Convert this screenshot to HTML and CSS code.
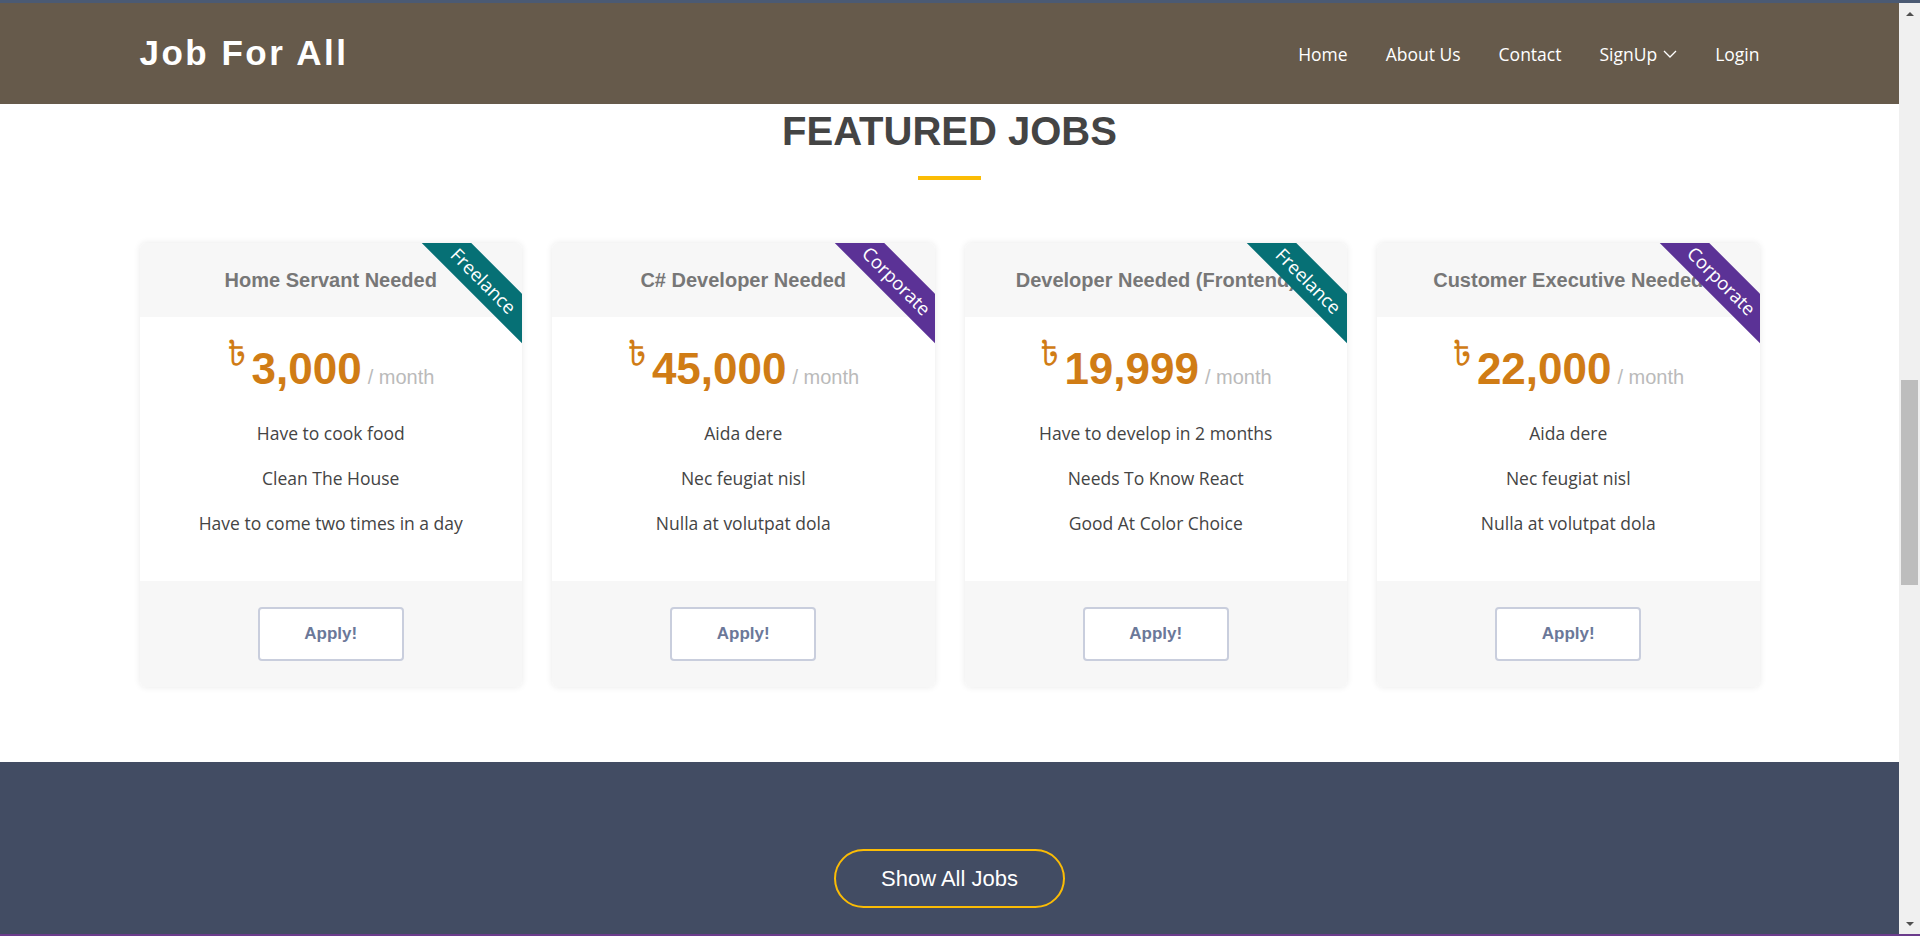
FILE: index.html
```html
<!DOCTYPE html>
<html lang="en">
<head>
<meta charset="utf-8">
<title>Job For All</title>
<link rel="stylesheet" href="styles.css">
</head>
<body>
<div class="window">
  <div class="frame-top"></div>
  <div class="viewport">
    <div class="page">
      <header class="topbar">
        <div class="container bar">
          <a class="logo" href="#">Job For All</a>
          <nav class="nav">
            <a href="#">Home</a>
            <a href="#">About Us</a>
            <a href="#">Contact</a>
            <a href="#" class="drop">SignUp <svg class="chev" width="14" height="8" viewBox="0 0 14 8"><polyline points="1,1 7,7 13,1" fill="none" stroke="#fff" stroke-width="1.3"/></svg></a>
            <a href="#">Login</a>
          </nav>
        </div>
      </header>

      <section class="featured">
        <h2 class="section-title">FEATURED JOBS</h2>
        <div class="title-bar"></div>
        <div class="container grid">
          <div class="card">
            <span class="ribbon freelance">Freelance</span>
            <div class="card-head"><h3>Home Servant Needed</h3></div>
            <div class="card-body">
              <h4 class="price"><span class="cur">৳</span><span class="amt">3,000</span><span class="per">/ month</span></h4>
              <ul class="list">
                <li>Have to cook food</li>
                <li>Clean The House</li>
                <li>Have to come two times in a day</li>
              </ul>
            </div>
            <div class="card-foot"><a href="#" class="apply">Apply!</a></div>
          </div>

          <div class="card">
            <span class="ribbon corporate">Corporate</span>
            <div class="card-head"><h3>C# Developer Needed</h3></div>
            <div class="card-body">
              <h4 class="price"><span class="cur">৳</span><span class="amt">45,000</span><span class="per">/ month</span></h4>
              <ul class="list">
                <li>Aida dere</li>
                <li>Nec feugiat nisl</li>
                <li>Nulla at volutpat dola</li>
              </ul>
            </div>
            <div class="card-foot"><a href="#" class="apply">Apply!</a></div>
          </div>

          <div class="card">
            <span class="ribbon freelance">Freelance</span>
            <div class="card-head"><h3>Developer Needed (Frontend)</h3></div>
            <div class="card-body">
              <h4 class="price"><span class="cur">৳</span><span class="amt">19,999</span><span class="per">/ month</span></h4>
              <ul class="list">
                <li>Have to develop in 2 months</li>
                <li>Needs To Know React</li>
                <li>Good At Color Choice</li>
              </ul>
            </div>
            <div class="card-foot"><a href="#" class="apply">Apply!</a></div>
          </div>

          <div class="card">
            <span class="ribbon corporate">Corporate</span>
            <div class="card-head"><h3>Customer Executive Needed</h3></div>
            <div class="card-body">
              <h4 class="price"><span class="cur">৳</span><span class="amt">22,000</span><span class="per">/ month</span></h4>
              <ul class="list">
                <li>Aida dere</li>
                <li>Nec feugiat nisl</li>
                <li>Nulla at volutpat dola</li>
              </ul>
            </div>
            <div class="card-foot"><a href="#" class="apply">Apply!</a></div>
          </div>
        </div>
      </section>

      <section class="cta">
        <a href="#" class="show-all">Show All Jobs</a>
      </section>
    </div>

    <div class="scrollbar">
      <div class="sb-btn"><span class="tri-up"></span></div>
      <div class="sb-track"><div class="sb-thumb"></div></div>
      <div class="sb-btn"><span class="tri-down"></span></div>
    </div>
  </div>
  <div class="frame-bottom"></div>
</div>
</body>
</html>
```

FILE: styles.css
```css
* { box-sizing: border-box; }
html, body { margin: 0; padding: 0; }
body {
  font-family: "Open Sans", "Liberation Sans", sans-serif;
  background: #fff;
  overflow: hidden;
}
a { text-decoration: none; color: inherit; }

.window {
  width: 1920px;
  height: 936px;
  display: flex;
  flex-direction: column;
}
.frame-top { height: 3px; background: #4b5a73; flex: none; }
.frame-bottom { height: 2px; background: #6b3c8c; flex: none; }

.viewport {
  flex: 1;
  display: flex;
  overflow: hidden;
}
.page {
  flex: 1;
  min-width: 0;
  overflow: hidden;
}

.container {
  width: 1620px;
  margin: 0 auto;
}

/* header */
.topbar {
  background: #665a4b;
  height: 101px;
}
.bar {
  height: 100%;
  display: flex;
  align-items: center;
  justify-content: space-between;
}
.logo {
  font-family: "Liberation Sans", Arial, sans-serif;
  font-weight: 700;
  font-size: 35px;
  letter-spacing: 2.5px;
  color: #fff;
  line-height: 1;
  padding-bottom: 2px;
}
.nav {
  display: flex;
  align-items: center;
  gap: 38px;
}
.nav a {
  color: #fff;
  font-size: 17.5px;
  line-height: 24px;
  display: flex;
  align-items: center;
}
.chev { margin-left: 6px; margin-top: 1px; }

/* featured */
.featured {
  height: 658px;
  padding-top: 3px;
}
.section-title {
  margin: 0;
  text-align: center;
  font-family: "Liberation Sans", Arial, sans-serif;
  font-weight: 700;
  font-size: 40px;
  line-height: 48px;
  color: #444;
}
.title-bar {
  width: 63px;
  height: 4px;
  background: #fbbc05;
  margin: 21px auto 0;
}
.grid {
  margin-top: 63px;
  display: grid;
  grid-template-columns: repeat(4, 1fr);
  gap: 30px;
}
.card {
  position: relative;
  overflow: hidden;
  background: #fff;
  border-radius: 6px;
  box-shadow: 0 0 7px rgba(0, 0, 0, 0.09);
  text-align: center;
}
.card-head {
  background: #f7f7f7;
  padding: 25px 0;
}
.card-head h3 {
  margin: 0;
  font-family: "Liberation Sans", Arial, sans-serif;
  font-weight: 700;
  font-size: 20px;
  line-height: 24px;
  color: #777;
  white-space: nowrap;
}
.card-body {
  padding: 27px 0 35px;
}
.price {
  margin: 0;
  height: 50px;
  display: flex;
  justify-content: center;
  align-items: baseline;
  font-family: "Liberation Sans", Arial, sans-serif;
  font-weight: 700;
  color: #d07c15;
}
.amt {
  font-size: 44px;
  line-height: 50px;
}
.cur {
  align-self: flex-start;
  font-family: "Noto Sans Bengali", "Lohit Bengali", "FreeSans", "DejaVu Sans", sans-serif;
  font-weight: 400;
  font-size: 33px;
  line-height: 30px;
  margin-top: -2px;
  margin-right: 5px;
}
.per {
  font-weight: 400;
  font-size: 20px;
  line-height: 50px;
  color: #bababa;
  margin-left: 6px;
}
.list {
  list-style: none;
  margin: 17px 0 0;
  padding: 0;
}
.list li {
  font-size: 17.5px;
  line-height: 45px;
  height: 45px;
  color: #444;
}
.card-foot {
  background: #f7f7f7;
  padding: 26px 0;
  height: 106px;
}
.apply {
  display: inline-block;
  width: 146px;
  height: 54px;
  border: 2px solid #c9cedd;
  border-radius: 4px;
  font-family: "Liberation Sans", Arial, sans-serif;
  font-weight: 700;
  font-size: 17px;
  line-height: 50px;
  color: #6b7899;
  background: #fff;
}

.ribbon {
  position: absolute;
  top: 20px;
  right: -62px;
  width: 200px;
  height: 35px;
  line-height: 35px;
  text-align: center;
  transform: rotate(45deg);
  color: #fff;
  font-size: 18.5px;
  z-index: 2;
}
.freelance { background: #067075; }
.corporate { background: #5b3296; }

/* cta */
.cta {
  background: #424c63;
  height: 172px;
  padding-top: 87px;
  text-align: center;
}
.show-all {
  display: inline-block;
  border: 2px solid #fbbc05;
  border-radius: 30px;
  padding: 16px 45px;
  font-family: "Liberation Sans", Arial, sans-serif;
  font-size: 22px;
  line-height: 23px;
  color: #fff;
}

/* scrollbar */
.scrollbar {
  width: 21px;
  flex: none;
  background: #f0f0f0;
  display: flex;
  flex-direction: column;
}
.sb-btn {
  height: 21px;
  flex: none;
  display: flex;
  align-items: center;
  justify-content: center;
}
.tri-up {
  width: 0; height: 0;
  border-left: 4px solid transparent;
  border-right: 4px solid transparent;
  border-bottom: 4px solid #505050;
}
.tri-down {
  width: 0; height: 0;
  border-left: 4px solid transparent;
  border-right: 4px solid transparent;
  border-top: 4px solid #505050;
}
.sb-track {
  flex: 1;
  padding: 0 2px;
}
.sb-thumb {
  margin-top: 356px;
  height: 205px;
  background: #bdbdbd;
}
```
